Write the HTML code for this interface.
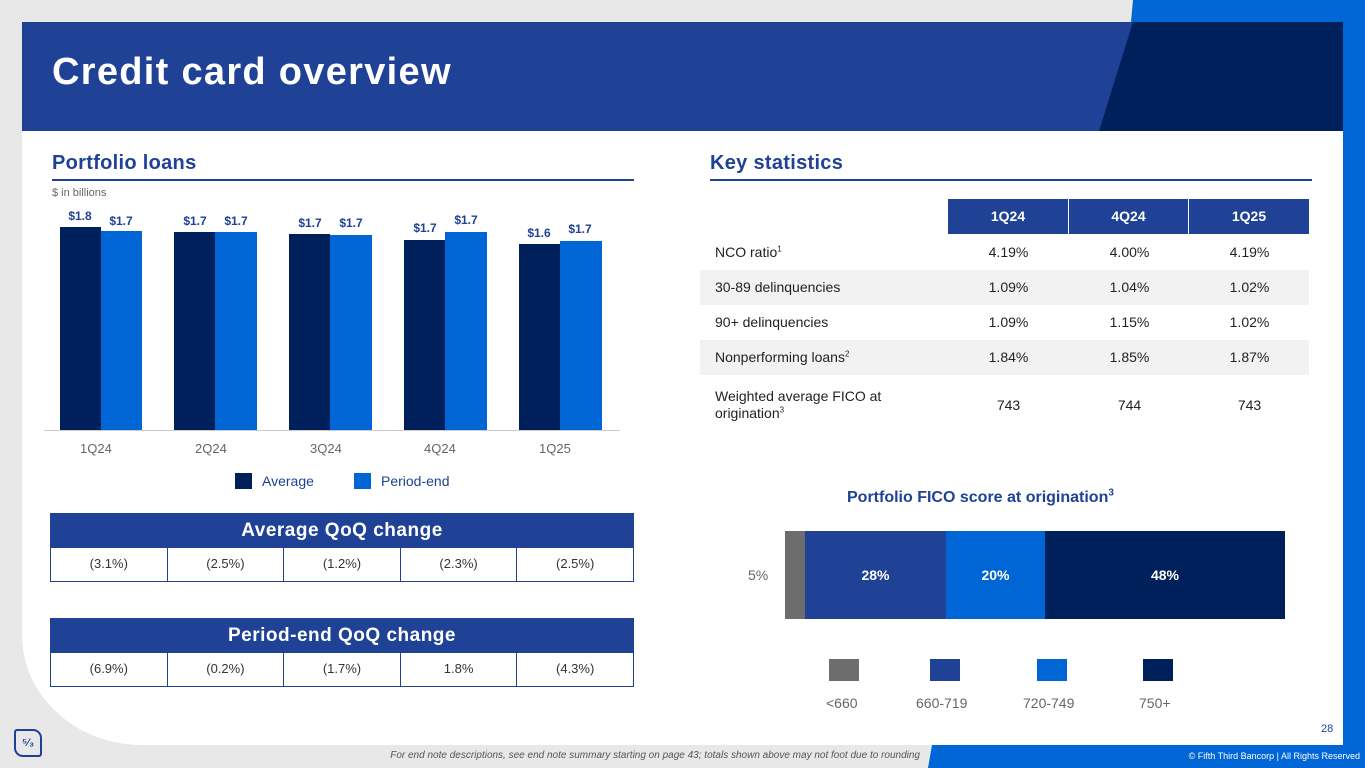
<!DOCTYPE html>
<html><head><meta charset="utf-8"><style>
*{margin:0;padding:0;box-sizing:border-box}
body{width:1365px;height:768px;overflow:hidden;background:#e8e8e8;font-family:"Liberation Sans",sans-serif;position:relative}
.a{position:absolute}
.card{left:22px;top:22px;width:1321px;height:723px;background:#fff;border-bottom-left-radius:120px 110px}
.t{position:absolute;white-space:nowrap}
.bar{position:absolute}
.dk{background:#00205b}.bl{background:#0066d6}.md{background:#1f4196}
.lab{position:absolute;font-size:12px;color:#1f4196;font-weight:bold;width:42px;text-align:center}
sup{line-height:0;font-size:8px}
.qt{position:absolute;left:50px;width:584px}
.qt .h{background:#1f4196;color:#fff;font-size:19px;font-weight:bold;text-align:center;height:35px;line-height:35px;letter-spacing:0.5px}
.qt .r{display:flex;height:34px;border:1.5px solid #1f4196;border-top:none}
.qt .r div{flex:1;text-align:center;line-height:32px;font-size:13px;color:#333;border-left:1.5px solid #1f4196}
.qt .r div:first-child{border-left:none}
.st{position:absolute;left:700px;width:609px}
.row{position:absolute;left:0;width:609px;font-size:14px;color:#222}
.row span{position:absolute;text-align:center;width:121px}
</style></head><body>
<div class="a card"></div>
<div class="a" style="left:1343px;top:0;width:22px;height:768px;background:#0066d6"></div>
<svg class="a" style="left:0;top:0" width="1365" height="768">
<polygon points="1133,0 1365,0 1365,22 1131,22" fill="#0066d6"/>
<rect x="22" y="22" width="1321" height="109" fill="#1f4196"/>
<polygon points="1133,22 1343,22 1343,131 1099,131" fill="#00205b"/>
<polygon points="932,745 1365,745 1365,768 928,768" fill="#0066d6"/>
</svg>
<div class="t" style="left:52px;top:51px;font-size:38px;font-weight:bold;color:#fff;letter-spacing:1.3px">Credit card overview</div>

<div class="t" style="left:52px;top:152px;font-size:20px;font-weight:bold;color:#1f4196;letter-spacing:0.3px">Portfolio loans</div>
<div class="a" style="left:52px;top:179px;width:582px;height:2px;background:#1f4196"></div>
<div class="t" style="left:52px;top:187px;font-size:11px;color:#666">$ in billions</div>

<div class="bar dk" style="left:60px;top:227px;width:41px;height:203px"></div>
<div class="bar bl" style="left:101px;top:231px;width:41px;height:199px"></div>
<div class="bar dk" style="left:174px;top:232px;width:41px;height:198px"></div>
<div class="bar bl" style="left:215px;top:232px;width:42px;height:198px"></div>
<div class="bar dk" style="left:289px;top:234px;width:41px;height:196px"></div>
<div class="bar bl" style="left:330px;top:235px;width:42px;height:195px"></div>
<div class="bar dk" style="left:404px;top:240px;width:41px;height:190px"></div>
<div class="bar bl" style="left:445px;top:232px;width:42px;height:198px"></div>
<div class="bar dk" style="left:519px;top:244px;width:41px;height:186px"></div>
<div class="bar bl" style="left:560px;top:241px;width:42px;height:189px"></div>
<div class="lab" style="left:59px;top:209px">$1.8</div>
<div class="lab" style="left:100px;top:214px">$1.7</div>
<div class="lab" style="left:174px;top:214px">$1.7</div>
<div class="lab" style="left:215px;top:214px">$1.7</div>
<div class="lab" style="left:289px;top:216px">$1.7</div>
<div class="lab" style="left:330px;top:216px">$1.7</div>
<div class="lab" style="left:404px;top:221px">$1.7</div>
<div class="lab" style="left:445px;top:213px">$1.7</div>
<div class="lab" style="left:518px;top:226px">$1.6</div>
<div class="lab" style="left:559px;top:222px">$1.7</div>
<div class="a" style="left:44px;top:430px;width:576px;height:1px;background:#ccc"></div>
<div class="t" style="left:80px;top:441px;font-size:13px;color:#666">1Q24</div>
<div class="t" style="left:195px;top:441px;font-size:13px;color:#666">2Q24</div>
<div class="t" style="left:310px;top:441px;font-size:13px;color:#666">3Q24</div>
<div class="t" style="left:424px;top:441px;font-size:13px;color:#666">4Q24</div>
<div class="t" style="left:539px;top:441px;font-size:13px;color:#666">1Q25</div>
<div class="a dk" style="left:235px;top:473px;width:17px;height:16px"></div>
<div class="t" style="left:262px;top:473px;font-size:14px;color:#1f4196">Average</div>
<div class="a bl" style="left:354px;top:473px;width:17px;height:16px"></div>
<div class="t" style="left:381px;top:473px;font-size:14px;color:#1f4196">Period-end</div>

<div class="qt" style="top:513px"><div class="h">Average QoQ change</div><div class="r"><div>(3.1%)</div><div>(2.5%)</div><div>(1.2%)</div><div>(2.3%)</div><div>(2.5%)</div></div></div>
<div class="qt" style="top:618px"><div class="h">Period-end QoQ change</div><div class="r"><div>(6.9%)</div><div>(0.2%)</div><div>(1.7%)</div><div>1.8%</div><div>(4.3%)</div></div></div>

<div class="t" style="left:710px;top:152px;font-size:20px;font-weight:bold;color:#1f4196;letter-spacing:0.3px">Key statistics</div>
<div class="a" style="left:710px;top:179px;width:602px;height:2px;background:#1f4196"></div>
<div class="a md" style="left:948px;top:199px;width:120px;height:35px;color:#fff;font-weight:bold;font-size:14px;text-align:center;line-height:35px">1Q24</div>
<div class="a md" style="left:1069px;top:199px;width:119px;height:35px;color:#fff;font-weight:bold;font-size:14px;text-align:center;line-height:35px">4Q24</div>
<div class="a md" style="left:1189px;top:199px;width:120px;height:35px;color:#fff;font-weight:bold;font-size:14px;text-align:center;line-height:35px">1Q25</div>
<div class="st" style="top:0">
<div class="row" style="top:234px;height:36px;line-height:36px"><b style="font-weight:normal;position:absolute;left:15px">NCO ratio<sup>1</sup></b><span style="left:248px">4.19%</span><span style="left:369px">4.00%</span><span style="left:489px">4.19%</span></div>
<div class="row" style="top:270px;height:35px;line-height:35px;background:#f2f2f2"><b style="font-weight:normal;position:absolute;left:15px">30-89 delinquencies</b><span style="left:248px">1.09%</span><span style="left:369px">1.04%</span><span style="left:489px">1.02%</span></div>
<div class="row" style="top:305px;height:35px;line-height:35px"><b style="font-weight:normal;position:absolute;left:15px">90+ delinquencies</b><span style="left:248px">1.09%</span><span style="left:369px">1.15%</span><span style="left:489px">1.02%</span></div>
<div class="row" style="top:340px;height:35px;line-height:35px;background:#f2f2f2"><b style="font-weight:normal;position:absolute;left:15px">Nonperforming loans<sup>2</sup></b><span style="left:248px">1.84%</span><span style="left:369px">1.85%</span><span style="left:489px">1.87%</span></div>
<div class="row" style="top:375px;height:60px;line-height:60px"><b style="font-weight:normal;position:absolute;left:15px;top:13px;line-height:17px">Weighted average FICO at<br>origination<sup>3</sup></b><span style="left:248px">743</span><span style="left:369px">744</span><span style="left:489px">743</span></div>
</div>

<div class="t" style="left:847px;top:489px;font-size:16px;font-weight:bold;color:#1f4196">Portfolio FICO score at origination<sup style="font-size:10px">3</sup></div>
<div class="a" style="left:785px;top:531px;width:20px;height:88px;background:#6d6d6d"></div>
<div class="a md" style="left:805px;top:531px;width:141px;height:88px;color:#fff;font-size:14px;font-weight:bold;text-align:center;line-height:88px">28%</div>
<div class="a bl" style="left:946px;top:531px;width:99px;height:88px;color:#fff;font-size:14px;font-weight:bold;text-align:center;line-height:88px">20%</div>
<div class="a dk" style="left:1045px;top:531px;width:240px;height:88px;color:#fff;font-size:14px;font-weight:bold;text-align:center;line-height:88px">48%</div>
<div class="t" style="left:748px;top:567px;font-size:14px;color:#666">5%</div>
<div class="a" style="left:829px;top:659px;width:30px;height:22px;background:#6d6d6d"></div>
<div class="a md" style="left:930px;top:659px;width:30px;height:22px"></div>
<div class="a bl" style="left:1037px;top:659px;width:30px;height:22px"></div>
<div class="a dk" style="left:1143px;top:659px;width:30px;height:22px"></div>
<div class="t" style="left:826px;top:695px;font-size:14px;color:#666">&lt;660</div>
<div class="t" style="left:916px;top:695px;font-size:14px;color:#666">660-719</div>
<div class="t" style="left:1023px;top:695px;font-size:14px;color:#666">720-749</div>
<div class="t" style="left:1139px;top:695px;font-size:14px;color:#666">750+</div>
<div class="t" style="left:1321px;top:723px;font-size:11px;color:#1f4196">28</div>

<div class="a" style="left:14px;top:729px;width:28px;height:28px;border:2px solid #1f4196;border-radius:3px 9px 3px 9px;color:#1f4196;font-size:11px;font-weight:bold;text-align:center;line-height:24px">⁵⁄₃</div>
<div class="t" style="left:130px;top:750px;width:790px;text-align:right;font-size:10px;font-style:italic;color:#555">For end note descriptions, see end note summary starting on page 43; totals shown above may not foot due to rounding</div>
<div class="t" style="left:1150px;top:751px;width:210px;text-align:right;font-size:9px;color:#fff">© Fifth Third Bancorp | All Rights Reserved</div>
</body></html>
